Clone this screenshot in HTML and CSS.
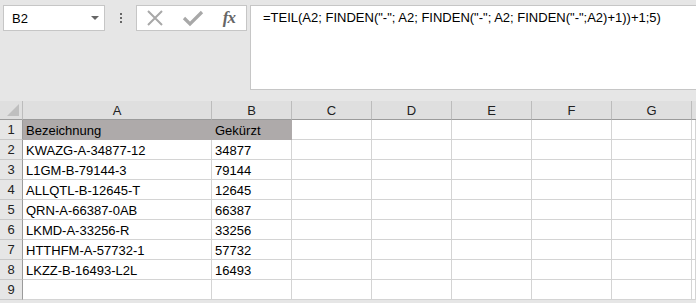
FILE: index.html
```html
<!DOCTYPE html>
<html lang="de">
<head>
  <meta charset="UTF-8">
  <title>Tabelle</title>
  <link rel="stylesheet" href="styles.css">
</head>
<body>
  <div class="toolbar">
    <div class="name-box">
      <span>B2</span>
      <span class="drop"></span>
    </div>
    <div class="grip"><i></i><i></i><i></i></div>
    <div class="fx-buttons">
      <svg class="ico" width="18" height="18" viewBox="0 0 18 18">
        <path d="M2 2 L16 16 M16 2 L2 16" stroke="#a8a8a8" stroke-width="2" fill="none"/>
      </svg>
      <svg class="ico" width="22" height="18" viewBox="0 0 22 18">
        <path d="M2 9 L8 15 L20 3" stroke="#a8a8a8" stroke-width="3.2" fill="none"/>
      </svg>
      <span class="fx">fx</span>
    </div>
    <div class="formula">=TEIL(A2; FINDEN("-"; A2; FINDEN("-"; A2; FINDEN("-";A2)+1))+1;5)</div>
  </div>

  <div class="sheet">
    <div class="corner"><span class="tri"></span></div>
    <div class="col-head">A</div>
    <div class="col-head">B</div>
    <div class="col-head">C</div>
    <div class="col-head">D</div>
    <div class="col-head">E</div>
    <div class="col-head">F</div>
    <div class="col-head">G</div>
    <div class="col-head rest"></div>

    <div class="row-head">1</div>
    <div class="cell title">Bezeichnung</div>
    <div class="cell title">Gekürzt</div>
    <div class="cell"></div><div class="cell"></div><div class="cell"></div><div class="cell"></div><div class="cell"></div><div class="cell"></div>

    <div class="row-head">2</div>
    <div class="cell">KWAZG-A-34877-12</div>
    <div class="cell">34877</div>
    <div class="cell"></div><div class="cell"></div><div class="cell"></div><div class="cell"></div><div class="cell"></div><div class="cell"></div>

    <div class="row-head">3</div>
    <div class="cell">L1GM-B-79144-3</div>
    <div class="cell">79144</div>
    <div class="cell"></div><div class="cell"></div><div class="cell"></div><div class="cell"></div><div class="cell"></div><div class="cell"></div>

    <div class="row-head">4</div>
    <div class="cell">ALLQTL-B-12645-T</div>
    <div class="cell">12645</div>
    <div class="cell"></div><div class="cell"></div><div class="cell"></div><div class="cell"></div><div class="cell"></div><div class="cell"></div>

    <div class="row-head">5</div>
    <div class="cell">QRN-A-66387-0AB</div>
    <div class="cell">66387</div>
    <div class="cell"></div><div class="cell"></div><div class="cell"></div><div class="cell"></div><div class="cell"></div><div class="cell"></div>

    <div class="row-head">6</div>
    <div class="cell">LKMD-A-33256-R</div>
    <div class="cell">33256</div>
    <div class="cell"></div><div class="cell"></div><div class="cell"></div><div class="cell"></div><div class="cell"></div><div class="cell"></div>

    <div class="row-head">7</div>
    <div class="cell">HTTHFM-A-57732-1</div>
    <div class="cell">57732</div>
    <div class="cell"></div><div class="cell"></div><div class="cell"></div><div class="cell"></div><div class="cell"></div><div class="cell"></div>

    <div class="row-head">8</div>
    <div class="cell">LKZZ-B-16493-L2L</div>
    <div class="cell">16493</div>
    <div class="cell"></div><div class="cell"></div><div class="cell"></div><div class="cell"></div><div class="cell"></div><div class="cell"></div>

    <div class="row-head">9</div>
    <div class="cell"></div><div class="cell"></div>
    <div class="cell"></div><div class="cell"></div><div class="cell"></div><div class="cell"></div><div class="cell"></div><div class="cell"></div>
  </div>
</body>
</html>
```

FILE: styles.css
```css
html, body {
  margin: 0;
  height: 100%;
  overflow: hidden;
}

body {
  font-family: "Liberation Sans", Arial, sans-serif;
  background-color: #e6e6e6;
  color: #000;
}

/* Bearbeitungsleiste */
.toolbar {
  display: flex;
  align-items: flex-start;
  height: 101px;
  padding-top: 5px;
  box-sizing: border-box;
}

.name-box {
  display: flex;
  align-items: center;
  justify-content: space-between;
  box-sizing: border-box;
  width: 102px;
  height: 26px;
  margin-left: 3px;
  padding: 0 5px 0 8px;
  background-color: #fff;
  border: 1px solid #c6c6c6;
  font-size: 13px;
}

.drop {
  width: 0;
  height: 0;
  border-left: 4px solid transparent;
  border-right: 4px solid transparent;
  border-top: 4px solid #666;
}

.grip {
  display: flex;
  flex-direction: column;
  gap: 2px;
  width: 31px;
  align-items: center;
  padding-top: 8px;
}

.grip i {
  width: 2px;
  height: 2px;
  background-color: #666;
}

.fx-buttons {
  display: flex;
  align-items: center;
  justify-content: space-between;
  box-sizing: border-box;
  width: 111px;
  height: 26px;
  padding: 0 9px 0 9px;
  background-color: #fff;
  border: 1px solid #c6c6c6;
}

.ico {
  display: block;
}

.fx {
  font-family: "Liberation Serif", "Times New Roman", serif;
  font-style: italic;
  font-weight: bold;
  font-size: 17px;
  color: #666;
  letter-spacing: -1px;
  padding-right: 2px;
}

.formula {
  flex: 1;
  box-sizing: border-box;
  height: 85px;
  margin-left: 3px;
  padding: 4px 0 0 12px;
  background-color: #fff;
  border: 1px solid #c6c6c6;
  border-right: none;
  font-size: 13px;
  white-space: nowrap;
}

/* Tabelle */
.sheet {
  display: grid;
  grid-template-columns: 23px 189px repeat(6, 80px) 1fr;
  grid-template-rows: 19px repeat(9, 20px);
  background-color: #fff;
  font-size: 13px;
}

.corner {
  position: relative;
  background-color: #dfdfdf;
  border-right: 1px solid #bcbcbc;
  border-bottom: 1px solid #9b9b9b;
}

.tri {
  position: absolute;
  right: 3px;
  bottom: 3px;
  width: 0;
  height: 0;
  border-left: 12px solid transparent;
  border-bottom: 12px solid #bfbfbf;
}

.col-head {
  display: flex;
  align-items: center;
  justify-content: center;
  background-color: #dfdfdf;
  border-right: 1px solid #bcbcbc;
  border-bottom: 1px solid #9b9b9b;
  color: #222;
}

.col-head.rest {
  border-right: none;
}

.row-head {
  display: flex;
  align-items: center;
  justify-content: center;
  background-color: #e6e6e6;
  border-right: 1px solid #9b9b9b;
  border-bottom: 1px solid #c8c8c8;
  color: #222;
}

.cell {
  display: flex;
  align-items: flex-end;
  padding: 0 0 1px 3px;
  border-right: 1px solid #d4d4d4;
  border-bottom: 1px solid #d4d4d4;
  white-space: nowrap;
  overflow: hidden;
}

.cell.title {
  background-color: #aeaaaa;
  border-right-color: #aeaaaa;
  border-bottom-color: #aeaaaa;
}
```
